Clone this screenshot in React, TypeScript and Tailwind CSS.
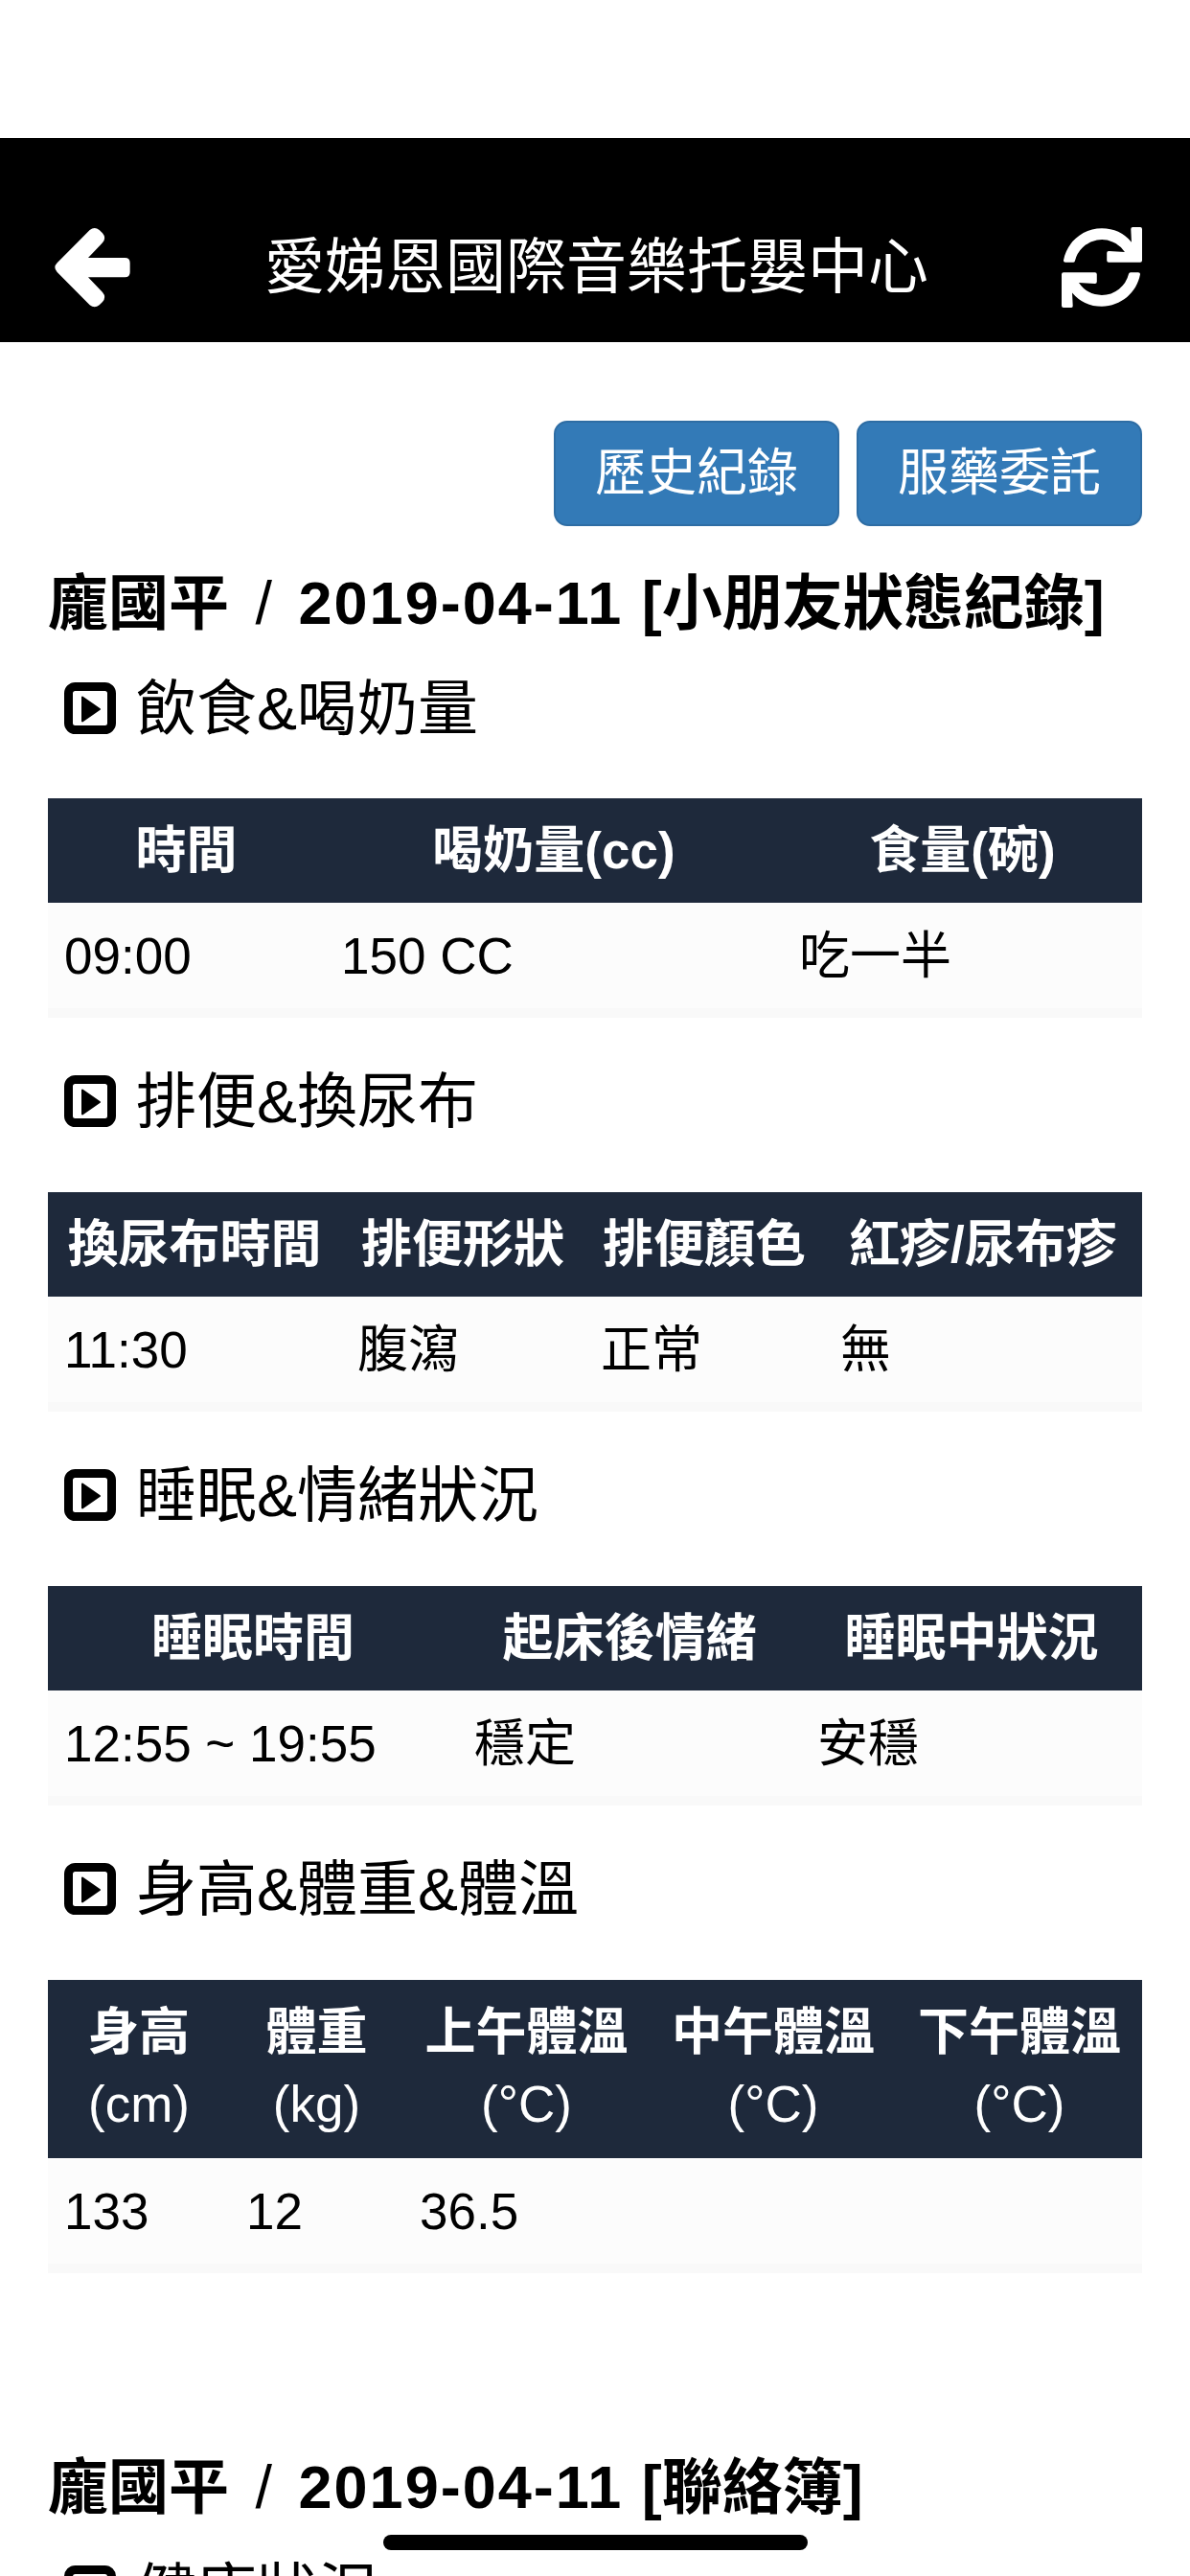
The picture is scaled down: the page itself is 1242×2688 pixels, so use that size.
import type { ReactNode } from "react";
import { FaSync } from "react-icons/fa";

type TableData = {
  cols: string[];
  head: string[][];
  row: string[];
};

const cjk = "font-['Liberation_Sans','Noto_Sans_CJK_TC',sans-serif]";

const food: TableData = {
  cols: ["w-[289px]", "w-[478px]", "w-[375px]"],
  head: [["時間"], ["喝奶量(cc)"], ["食量(碗)"]],
  row: ["09:00", "150 CC", "吃一半"],
};

const diaper: TableData = {
  cols: ["w-[306px]", "w-[254px]", "w-[250px]", "w-[332px]"],
  head: [["換尿布時間"], ["排便形狀"], ["排便顏色"], ["紅疹/尿布疹"]],
  row: ["11:30", "腹瀉", "正常", "無"],
};

const sleep: TableData = {
  cols: ["w-[428px]", "w-[358px]", "w-[356px]"],
  head: [["睡眠時間"], ["起床後情緒"], ["睡眠中狀況"]],
  row: ["12:55 ~ 19:55", "穩定", "安穩"],
};

const body: TableData = {
  cols: ["w-[190px]", "w-[181px]", "w-[257px]", "w-[258px]", "w-[256px]"],
  head: [
    ["身高", "(cm)"],
    ["體重", "(kg)"],
    ["上午體溫", "(°C)"],
    ["中午體溫", "(°C)"],
    ["下午體溫", "(°C)"],
  ],
  row: ["133", "12", "36.5", "", ""],
};

const BackArrow = () => (
  <svg viewBox="74 78 246 258" className="w-[82px] h-[86px] shrink-0" fill="currentColor">
    <path d="M88 193 L190 90 Q205 78 220 90 L230 100 Q243 115 230 130 L185 177 H300 Q316 177 316 193 V222 Q316 238 300 238 H185 L230 285 Q243 300 230 315 L220 325 Q205 337 190 325 L88 222 Q74 207 88 193 Z" />
  </svg>
);

const PlayBox = () => (
  <svg viewBox="0 0 54 54" className="w-[54px] h-[54px] shrink-0">
    <rect x="4.5" y="4.5" width="45" height="45" rx="7" fill="none" stroke="black" strokeWidth="9" />
    <path d="M19 15.5 L37 28 L19 40.5 Z" fill="black" stroke="black" strokeWidth="2" strokeLinejoin="round" />
  </svg>
);

const SectionTitle = ({ text, className }: { text: string; className: string }) => {
  return (
    <div className={`flex items-center gap-[21px] pl-[17px] text-[63px] leading-[72px] text-black ${className}`}>
      <PlayBox />
      <span>{text}</span>
    </div>
  );
};

const InfoTable = ({ data }: { data: TableData }) => {
  return (
    <table className="w-full table-fixed border-collapse">
      <colgroup>
        {data.cols.map((c, i) => (
          <col key={i} className={c} />
        ))}
      </colgroup>
      <thead>
        <tr className="bg-[#1e293b] text-white">
          {data.head.map((lines, i) => (
            <th key={i} className="p-0 py-[16px] text-center text-[53px] leading-[77px] font-bold">
              {lines.map((l) => (
                <div key={l} className={l.startsWith("(") ? "font-normal -mt-[2px] pb-[2px]" : ""}>
                  {l}
                </div>
              ))}
            </th>
          ))}
        </tr>
      </thead>
      <tbody>
        <tr className="bg-[#fcfcfc] border-b-[10px] border-[#f9f9f9]">
          {data.row.map((v, i) => (
            <td key={i} className="pl-[17px] pt-[22px] pb-[21px] text-[53px] leading-[67px] font-normal text-black">
              {v}
            </td>
          ))}
        </tr>
      </tbody>
    </table>
  );
};

const Heading = ({ children, className }: { children: ReactNode; className: string }) => {
  return (
    <h3 className={`text-[63px] leading-[72px] font-bold text-black whitespace-nowrap [word-spacing:10px] ${className}`}>
      {children}
    </h3>
  );
};

export default function App() {
  return (
    <div className={`relative h-[2688px] overflow-hidden bg-white ${cjk}`}>
      <div className="h-[144px]" />
      {/* header bar */}
      <header className="h-[213px] bg-black text-white flex items-center justify-between pl-[55px] pr-[50px] pt-[56px]">
        <BackArrow />
        <span className="text-[63px] leading-none">愛娣恩國際音樂托嬰中心</span>
        <FaSync className="w-[84px] h-[84px]" />
      </header>

      <main className="px-[50px]">
        <div className="flex justify-end gap-[18px] pt-[82px]">
          <button className="w-[298px] h-[110px] rounded-[14px] bg-[#337ab7] border-2 border-[#2e6da4] text-white text-[53px]">
            歷史紀錄
          </button>
          <button className="w-[298px] h-[110px] rounded-[14px] bg-[#337ab7] border-2 border-[#2e6da4] text-white text-[53px]">
            服藥委託
          </button>
        </div>

        <Heading className="mt-[44px]">
          龐國平 <span className="font-normal">/</span> <span className="tracking-[2px] -mr-[8px]">2019-04-11</span> [小朋友狀態紀錄]
        </Heading>
        <SectionTitle text="飲食&喝奶量" className="mt-[38px] mb-[58px]" />
        <InfoTable data={food} />

        <SectionTitle text="排便&換尿布" className="mt-[51px] mb-[59px]" />
        <InfoTable data={diaper} />

        <SectionTitle text="睡眠&情緒狀況" className="mt-[51px] mb-[59px]" />
        <InfoTable data={sleep} />

        <SectionTitle text="身高&體重&體溫" className="mt-[51px] mb-[59px]" />
        <InfoTable data={body} />

        <Heading className="mt-[187px]">
          龐國平 <span className="font-normal">/</span> <span className="tracking-[2px] -mr-[8px]">2019-04-11</span> [聯絡簿]
        </Heading>
        <SectionTitle text="健康狀況" className="mt-[37px]" />
      </main>

      {/* home indicator */}
      <div className="absolute left-[400px] top-[2645px] w-[443px] h-[16px] rounded-full bg-black" />
    </div>
  );
}
